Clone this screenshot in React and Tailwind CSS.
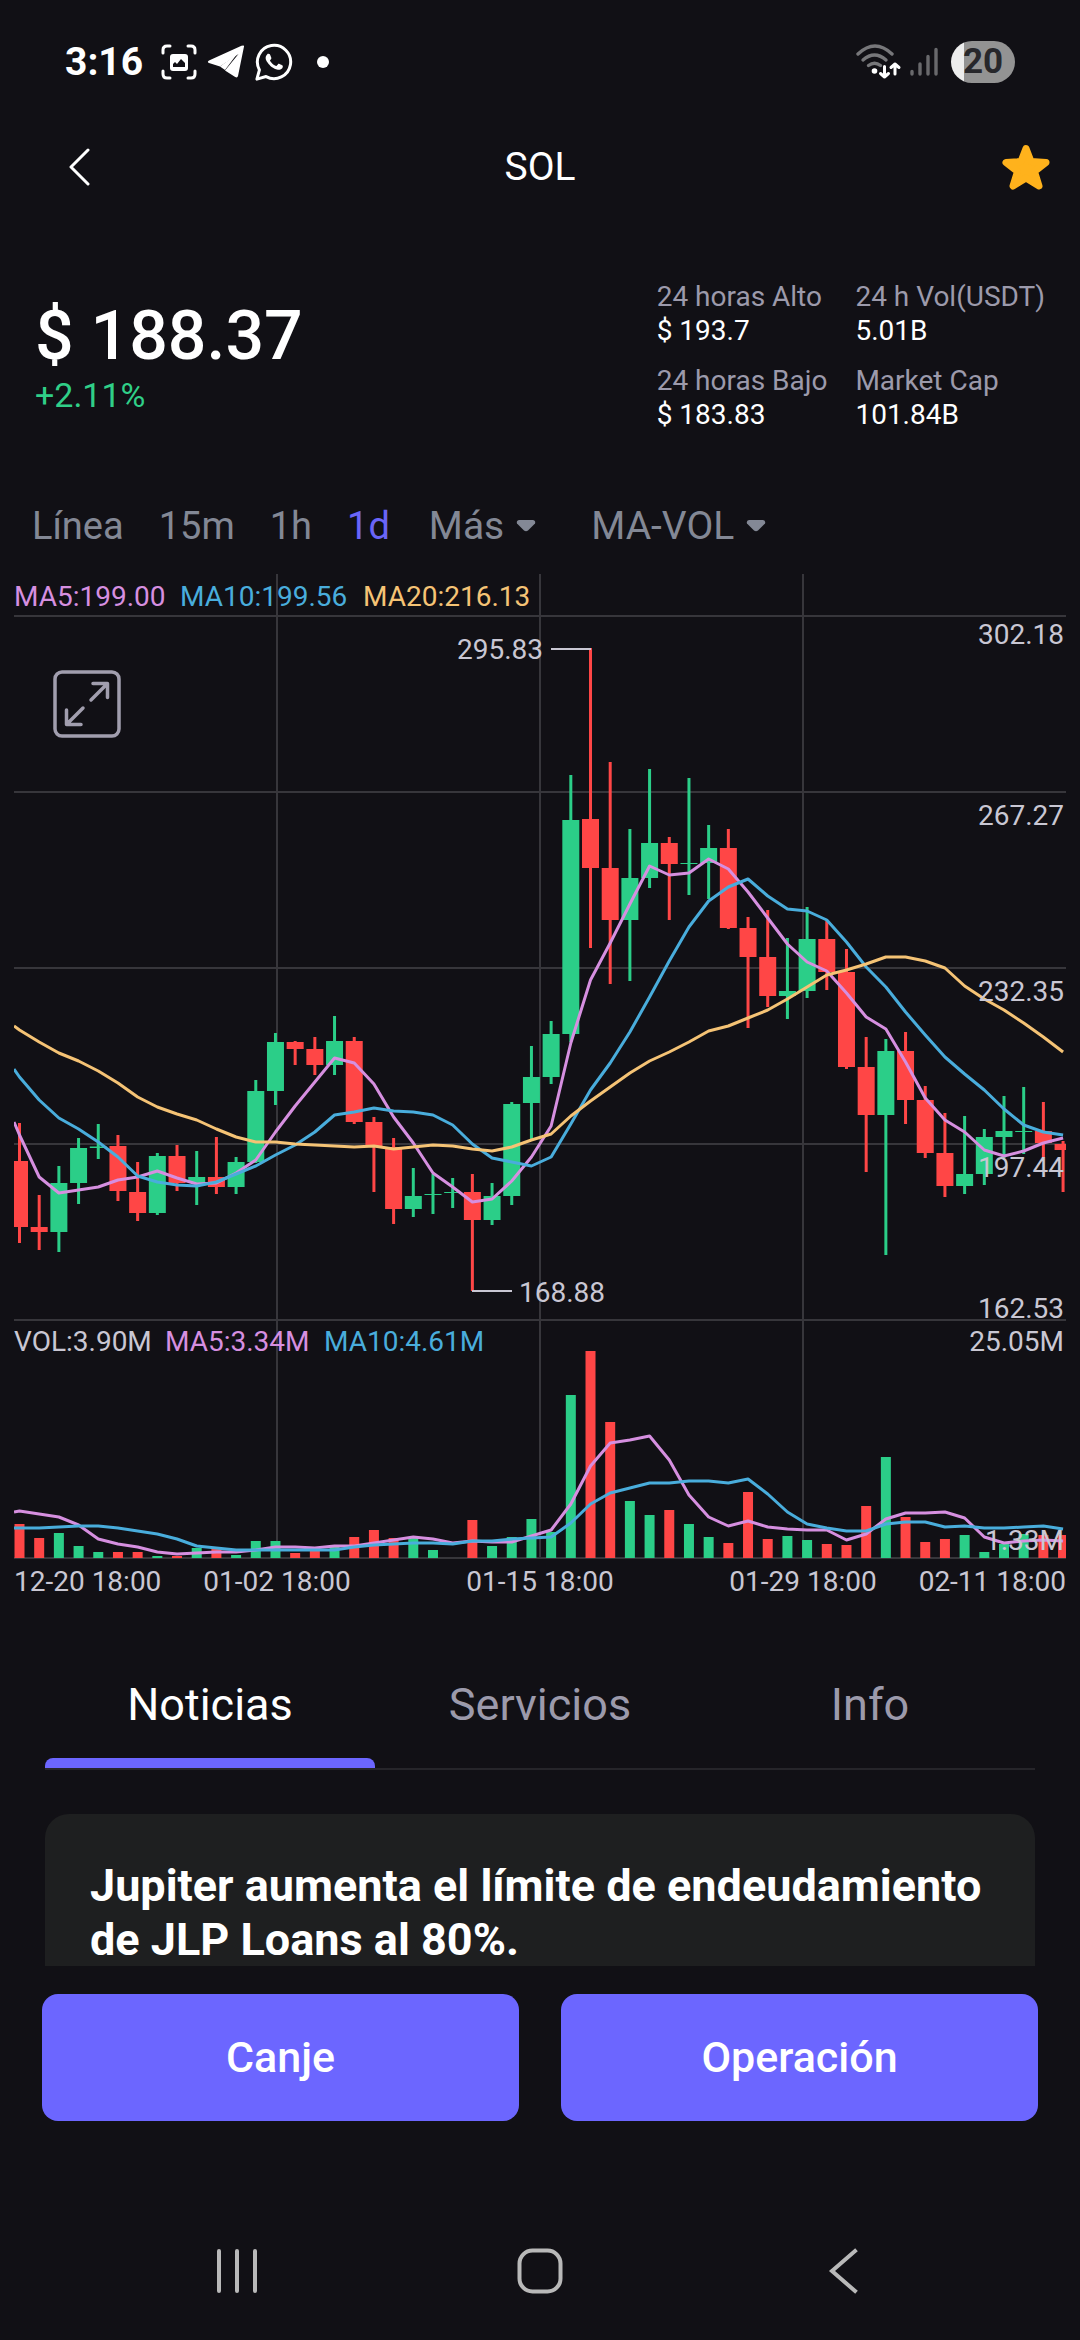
const UP = '#2bce88';
const DOWN = '#ff4646';
const MA5 = '#d68fe0';
const MA10 = '#49addc';
const MA20 = '#f5c375';
const LABEL = '#c9c7d3';
const GRID = '#37363b';

const X0 = 19.5;
const STEP = 19.69;
const LEFT = 14;
const RIGHT = 1066;
const VOLUME_BASE = 1558;
const xAt = (i) => X0 + i * STEP;

// [direction, body top, body bottom, wick top, wick bottom, volume bar top]
const candles = [
  ['d', 1161, 1227, 1123, 1243, 1524],
  ['d', 1227, 1232, 1195, 1250, 1538],
  ['u', 1183, 1232, 1166, 1252, 1533],
  ['u', 1148, 1183, 1138, 1204, 1546],
  ['u', 1146.5, 1148, 1124, 1159, 1552],
  ['d', 1146, 1191, 1135, 1201, 1552],
  ['d', 1192, 1213, 1162, 1221, 1552],
  ['u', 1156, 1213, 1153, 1215, 1556],
  ['d', 1156, 1183, 1145, 1191, 1556],
  ['u', 1177, 1183, 1151, 1205, 1548],
  ['d', 1177, 1187, 1137, 1194, 1548],
  ['u', 1162, 1187, 1157, 1194, 1555],
  ['u', 1091, 1162, 1080, 1163, 1541],
  ['u', 1042, 1091, 1033, 1105, 1541],
  ['d', 1042, 1049, 1041, 1065, 1553],
  ['d', 1049, 1065, 1037, 1075, 1551],
  ['u', 1041, 1065, 1016, 1075, 1545],
  ['d', 1041, 1122, 1037, 1124, 1537],
  ['d', 1122, 1146, 1117, 1192, 1530],
  ['d', 1147, 1209, 1138, 1224, 1538],
  ['u', 1196, 1209, 1168, 1217, 1537],
  ['u', 1194, 1195, 1174, 1214, 1550],
  ['u', 1192, 1193, 1178, 1208, 1558],
  ['d', 1192, 1220, 1174, 1291, 1520],
  ['u', 1196, 1220, 1183, 1225, 1546],
  ['u', 1104, 1196, 1102, 1205, 1537],
  ['u', 1077, 1103, 1046, 1140, 1519],
  ['u', 1034, 1077, 1021, 1084, 1532],
  ['u', 820, 1034, 775, 1042, 1395],
  ['d', 819, 868, 648, 948, 1351],
  ['d', 868, 920, 762, 984, 1422],
  ['u', 878, 920, 829, 981, 1501],
  ['u', 843, 878, 769, 888, 1515],
  ['d', 843, 864, 837, 920, 1510],
  ['u', 863, 864, 778, 895, 1524],
  ['u', 848, 863, 825, 899, 1537],
  ['d', 848, 928, 829, 929, 1543],
  ['d', 928, 957, 917, 1028, 1492],
  ['d', 957, 996, 910, 1007, 1539],
  ['u', 991, 996, 938, 1019, 1536],
  ['u', 939, 991, 907, 998, 1540],
  ['d', 939, 972, 921, 990, 1544],
  ['d', 972, 1067, 949, 1069, 1545],
  ['d', 1067, 1115, 1037, 1172, 1506],
  ['u', 1051, 1115, 1039, 1255, 1457],
  ['d', 1051, 1100, 1032, 1124, 1517],
  ['d', 1100, 1153, 1086, 1158, 1542],
  ['d', 1153, 1186, 1113, 1197, 1539],
  ['u', 1174, 1186, 1116, 1194, 1535],
  ['u', 1137, 1174, 1129, 1185, 1552],
  ['u', 1131, 1137, 1096, 1158, 1544],
  ['u', 1131, 1132, 1087, 1154, 1534],
  ['d', 1131, 1143, 1102, 1158, 1535],
  ['d', 1144, 1150, 1141, 1192, 1535],
];

// The first value of every series is where the line meets the left edge.
const priceMa5 = [
  1122, 1135, 1177, 1193, 1190, 1187, 1180, 1177, 1171, 1178, 1184, 1183, 1173, 1160, 1132, 1106, 1082, 1058, 1063,
  1084, 1117, 1143, 1173, 1187, 1202, 1199, 1181, 1157, 1126, 1043, 980, 943, 904, 866, 875, 873, 859, 869, 892, 918,
  944, 962, 971, 993, 1017, 1029, 1062, 1098, 1120, 1132, 1150, 1156, 1151, 1143, 1138,
];
const priceMa10 = [
  1069, 1077, 1100, 1118, 1129, 1142, 1157, 1176, 1182, 1185, 1186, 1182, 1174, 1166, 1155, 1145, 1132, 1115, 1112,
  1108, 1111, 1112, 1115, 1125, 1144, 1158, 1162, 1166, 1157, 1124, 1090, 1063, 1032, 997, 961, 927, 901, 887, 879,
  896, 909, 911, 920, 942, 967, 987, 1012, 1035, 1057, 1074, 1090, 1109, 1125, 1132, 1135,
];
const priceMa20 = [
  1026, 1030, 1042, 1053, 1061, 1071, 1083, 1097, 1107, 1114, 1120, 1129, 1137, 1142, 1142, 1144, 1145, 1146, 1147,
  1146, 1149, 1147, 1145, 1146, 1149, 1151, 1147, 1140, 1134, 1116, 1101, 1087, 1073, 1061, 1052, 1042, 1031, 1026,
  1018, 1010, 999, 987, 975, 970, 964, 957, 957, 961, 968, 986, 999, 1010, 1023, 1037, 1052,
];
const volumeMa5 = [
  1512, 1511, 1514, 1517, 1525, 1539, 1544, 1547, 1552, 1554, 1553, 1552, 1552, 1550, 1547, 1547, 1548, 1546, 1546,
  1543, 1540, 1537, 1539, 1543, 1541, 1542, 1542, 1536, 1530, 1504, 1466, 1443, 1440, 1436, 1460, 1495, 1517, 1526,
  1521, 1527, 1529, 1530, 1530, 1540, 1534, 1519, 1513, 1513, 1512, 1518, 1537, 1543, 1541, 1540, 1541,
];
const volumeMa10 = [
  1528, 1528, 1528, 1527, 1526, 1526, 1528, 1531, 1534, 1539, 1546, 1548, 1550, 1550, 1550, 1550, 1550, 1550, 1547,
  1545, 1544, 1543, 1543, 1544, 1541, 1541, 1539, 1538, 1537, 1523, 1504, 1493, 1488, 1483, 1483, 1481, 1481, 1483,
  1479, 1494, 1512, 1524, 1528, 1531, 1531, 1524, 1522, 1522, 1527, 1526, 1528, 1528, 1527, 1526, 1529,
];

const toPoints = (series) => series.map((y, i) => `${i === 0 ? LEFT : xAt(i - 1)},${y}`).join(' ');

function Line({ series, color }) {
  return <polyline points={toPoints(series)} fill="none" stroke={color} strokeWidth="3" strokeLinejoin="round" />;
}

const priceLabels = [
  ['302.18', 644],
  ['267.27', 825],
  ['232.35', 1001],
  ['197.44', 1177],
  ['162.53', 1318],
  ['25.05M', 1351],
  ['1.33M', 1550],
];

const dateLabels = [
  ['12-20 18:00', LEFT, 'start'],
  ['01-02 18:00', 277, 'middle'],
  ['01-15 18:00', 540, 'middle'],
  ['01-29 18:00', 803, 'middle'],
  ['02-11 18:00', RIGHT, 'end'],
];

function CandleChart() {
  return (
    <svg viewBox="14 574 1052 1030" className="block w-full" role="img" aria-label="Gráfico de velas de SOL" fontSize="28">
      <defs>
        <clipPath id="plot">
          <rect x={LEFT} y="574" width={RIGHT - LEFT} height="990" />
        </clipPath>
      </defs>
      <g stroke={GRID} strokeWidth="2">
        {[616, 792, 968, 1144, 1320, 1558].map((y) => (
          <line key={y} x1={LEFT} x2={RIGHT} y1={y} y2={y} />
        ))}
        {[277, 540, 803].map((x) => (
          <line key={x} x1={x} x2={x} y1="574" y2="1558" />
        ))}
      </g>
      <g clipPath="url(#plot)">
        {candles.map(([dir, top, bottom, high, low, volume], i) => {
          const x = xAt(i);
          return (
            <g key={i} fill={dir === 'u' ? UP : DOWN}>
              <rect x={x - 1.5} y={high} width="3" height={low - high} />
              <rect x={x - 8.5} y={top} width="17" height={bottom - top} />
              <rect x={x - 5} y={volume} width="10" height={VOLUME_BASE - volume} />
            </g>
          );
        })}
        <Line series={priceMa5} color={MA5} />
        <Line series={priceMa10} color={MA10} />
        <Line series={priceMa20} color={MA20} />
        <Line series={volumeMa5} color={MA5} />
        <Line series={volumeMa10} color={MA10} />
      </g>
      <g stroke={LABEL} strokeWidth="2">
        <line x1="551" x2="591" y1="649" y2="649" />
        <line x1="472" x2="512" y1="1291" y2="1291" />
      </g>
      <g fill={LABEL}>
        <text x="543" y="659" textAnchor="end">295.83</text>
        <text x="519" y="1302">168.88</text>
        {priceLabels.map(([text, y]) => (
          <text key={text} x="1064" y={y} textAnchor="end">{text}</text>
        ))}
        {dateLabels.map(([text, x, anchor]) => (
          <text key={text} x={x} y="1591" textAnchor={anchor}>{text}</text>
        ))}
        <text x="14" y="1351">VOL:3.90M</text>
      </g>
      <text x="14" y="606" fill={MA5}>MA5:199.00</text>
      <text x="180" y="606" fill={MA10}>MA10:199.56</text>
      <text x="363" y="606" fill={MA20}>MA20:216.13</text>
      <text x="165" y="1351" fill={MA5}>MA5:3.34M</text>
      <text x="324" y="1351" fill={MA10}>MA10:4.61M</text>
    </svg>
  );
}

function StatusBar() {
  return (
    <div className="flex h-[124px] items-center justify-between px-[65px]">
      <div className="flex items-center">
        <span className="text-[39px] leading-[48px] font-bold">3:16</span>
        <svg viewBox="0 0 36 36" className="ml-[18px] size-9" fill="none" stroke="white" strokeWidth="3" strokeLinecap="round">
          <path d="M2 9V6q0-4 4-4h3M27 2h3q4 0 4 4v3M34 27v3q0 4-4 4h-3M9 34H6q-4 0-4-4v-3" />
          <rect x="9" y="10" width="18" height="17" rx="3" fill="white" stroke="none" />
          <path d="M12 23v-3l2-2 2 2 4-5 4 4v4z" fill="#111015" stroke="none" />
        </svg>
        <svg viewBox="0 0 38 34" className="ml-[10px] h-[34px] w-[38px]" fill="white">
          <path d="M37 1.500 31 31q-.6 2.300-2.800 1L18 25.500 31.500 9 13 21.500 2 18q-2.300-1 0-2.400L34.500.8Q37.500-.2 37 1.500z" />
          <path d="M13 21.500 30 9 18 25z" />
        </svg>
        <svg viewBox="0 0 24 24" className="ml-[10px] size-[38px]" fill="white">
          <path
            transform="translate(1.300 1.100) scale(.9)"
            d="M17.472 14.382c-.297-.149-1.758-.867-2.030-.967-.273-.099-.471-.148-.670.150-.197.297-.767.966-.940 1.164-.173.199-.347.223-.644.075-.297-.150-1.255-.463-2.390-1.475-.883-.788-1.480-1.761-1.653-2.059-.173-.297-.018-.458.130-.606.134-.133.298-.347.446-.520.149-.174.198-.298.298-.497.099-.198.050-.371-.025-.520-.075-.149-.669-1.612-.916-2.207-.242-.579-.487-.500-.669-.510-.173-.008-.371-.010-.570-.010-.198 0-.520.074-.792.372-.272.297-1.040 1.016-1.040 2.479 0 1.462 1.065 2.875 1.213 3.074.149.198 2.096 3.200 5.077 4.487.709.306 1.262.489 1.694.625.712.227 1.360.195 1.871.118.571-.085 1.758-.719 2.006-1.413.248-.694.248-1.289.173-1.413-.074-.124-.272-.198-.570-.347"
          />
          <path d="M1.200 22.800 2.800 17A10.500 10.500 0 1 1 7 21.200z" fill="none" stroke="white" strokeWidth="1.900" strokeLinejoin="round" />
        </svg>
        <span className="ml-[24px] size-3 rounded-full bg-white" />
      </div>
      <div className="flex items-center">
        <svg viewBox="0 0 46 36" className="h-9 w-[46px]" fill="none" strokeLinecap="round">
          <g stroke="#77777a" strokeWidth="3.400">
            <path d="M2 10Q19-6 36 10" />
            <path d="M7 16Q18.500 6 30 16" />
            <path d="M12.500 21.500Q18.500 17 24.500 21.500" />
          </g>
          <circle cx="18.500" cy="27" r="2.800" fill="white" />
          <path d="M28.500 22.500v10.500M24.500 29.500l4 3.500 4-3.500M39 30V20M35 23.500l4-3.500 4 3.500" stroke="white" strokeWidth="3" strokeLinejoin="round" />
        </svg>
        <svg viewBox="0 0 28 32" className="ml-2 h-8 w-7" stroke="#69696c" strokeWidth="3.400" strokeLinecap="round">
          <path d="M2 25.500v2.500M10 18v10M18 10.500v17.500M26 3.500v24.500" />
        </svg>
        <span className="ml-[13px] flex h-[42px] w-16 items-center justify-center rounded-full bg-linear-to-r from-[#ededed] from-20% to-[#939393] to-20% text-[35px] font-bold text-[#27272b]">
          20
        </span>
      </div>
    </div>
  );
}

function Stat({ label, value }) {
  return (
    <div>
      <dt className="text-[#9c9aab]">{label}</dt>
      <dd>{value}</dd>
    </div>
  );
}

function Caret() {
  return (
    <svg viewBox="0 0 20 12" className="h-3 w-5" fill="currentColor">
      <path d="M3 0h14q3 .5 2 3.500L12 10.500q-2 1.500-4 0L1 3.500Q0 .5 3 0z" />
    </svg>
  );
}

const tabs = ['Noticias', 'Servicios', 'Info'];

export default function App() {
  return (
    <div className="flex min-h-screen flex-col bg-[#111015] font-[Roboto,sans-serif] text-white">
      <StatusBar />
      <header className="flex h-[86px] items-center justify-between pr-[29px] pl-[58px]">
        <button type="button" aria-label="Atrás" className="flex w-12 justify-center">
          <svg viewBox="0 0 22 38" className="mr-[6px] h-[38px] w-[22px]" fill="none" stroke="white" strokeWidth="3" strokeLinecap="round" strokeLinejoin="round">
            <path d="M20 2 3 19l17 17" />
          </svg>
        </button>
        <h1 className="mr-[27px] text-[39px] leading-[48px]">SOL</h1>
        <button type="button" aria-label="Favorito">
          <svg viewBox="0 0 50 48" className="h-12 w-[50px]" fill="#ffb21c" stroke="#ffb21c" strokeWidth="7" strokeLinejoin="round">
            <path d="M25 5.500 30 18.500 45 19.500 33.500 28.500 38 43 25 35 12 43 16.500 28.500 5 19.500 20 18.500z" />
          </svg>
        </button>
      </header>

      <section className="mt-[70px] flex items-center justify-between px-[35px]">
        <div>
          <p className="text-[68px] leading-[78px] font-medium">$ 188.37</p>
          <p className="text-[34px] leading-[40px] text-[#30cf88]">+2.11%</p>
        </div>
        <dl className="grid grid-cols-[auto_auto] gap-x-7 gap-y-4 text-[28px] leading-[34px]">
          <Stat label="24 horas Alto" value="$ 193.7" />
          <Stat label="24 h Vol(USDT)" value="5.01B" />
          <Stat label="24 horas Bajo" value="$ 183.83" />
          <Stat label="Market Cap" value="101.84B" />
        </dl>
      </section>

      <nav className="mt-[70px] flex items-center gap-[35px] pl-8 text-[38px] leading-[48px] text-[#838895]">
        <button type="button">Línea</button>
        <button type="button">15m</button>
        <button type="button">1h</button>
        <button type="button" className="text-[#6a65f8]">1d</button>
        <button type="button" className="ml-1 flex items-center gap-3 text-[39px]">
          Más <Caret />
        </button>
        <button type="button" className="ml-5 flex items-center gap-3 text-[39px]">
          MA-VOL <Caret />
        </button>
      </nav>

      <section className="relative mt-6 px-[14px]">
        <CandleChart />
        <button type="button" aria-label="Pantalla completa" className="absolute top-24 left-[53px]">
          <svg viewBox="0 0 68 68" className="size-[68px]" fill="none" stroke="#a19eae" strokeWidth="3.500" strokeLinecap="round" strokeLinejoin="round">
            <rect x="2" y="2" width="64" height="64" rx="7" />
            <path d="M38 30 54 14M40 13.500h14.500v14M30 38 14 54M13.500 40v14.500h14.500" />
          </svg>
        </button>
      </section>

      <div role="tablist" className="mx-[45px] mt-[47px] grid grid-cols-3 border-b-2 border-[#26252a] text-[45px] leading-[52px]">
        {tabs.map((tab, i) => (
          <button key={tab} type="button" role="tab" aria-selected={i === 0} className="flex flex-col text-[#9c9aab] aria-selected:text-white">
            <span className="flex h-[107px] w-full items-center justify-center">{tab}</span>
            <span className={i === 0 ? 'h-[10px] w-full rounded-t-lg bg-[#6c66ff]' : 'h-[10px] w-full'} />
          </button>
        ))}
      </div>

      <section className="mx-[45px] mt-11 h-[152px] overflow-hidden">
        <article className="rounded-3xl bg-[#1e1f20] p-[45px]">
          <h2 className="text-[45px] leading-[54px] font-bold">Jupiter aumenta el límite de endeudamiento de JLP Loans al 80%.</h2>
        </article>
      </section>

      <div className="mx-[42px] mt-7 grid grid-cols-2 gap-[42px] text-[43px] font-medium">
        <button type="button" className="h-[127px] rounded-2xl bg-[#6c66ff]">Canje</button>
        <button type="button" className="h-[127px] rounded-2xl bg-[#6c66ff]">Operación</button>
      </div>

      <footer className="mt-auto grid h-[138px] grid-cols-3 items-center px-[85px]">
        <button type="button" aria-label="Recientes" className="flex justify-center">
          <svg viewBox="0 0 42 46" className="h-[46px] w-[42px]" stroke="#b9b9b9" strokeWidth="4" strokeLinecap="round">
            <path d="M3 3v40M21 3v40M39 3v40" />
          </svg>
        </button>
        <button type="button" aria-label="Inicio" className="flex justify-center">
          <svg viewBox="0 0 46 46" className="size-[46px]" fill="none" stroke="#b9b9b9" strokeWidth="4">
            <rect x="2.500" y="2.500" width="41" height="41" rx="13" />
          </svg>
        </button>
        <button type="button" aria-label="Volver" className="flex justify-center">
          <svg viewBox="0 0 32 48" className="h-12 w-8" fill="none" stroke="#b9b9b9" strokeWidth="4" strokeLinecap="square">
            <path d="M28 4 5 24l23 20" />
          </svg>
        </button>
      </footer>
    </div>
  );
}
